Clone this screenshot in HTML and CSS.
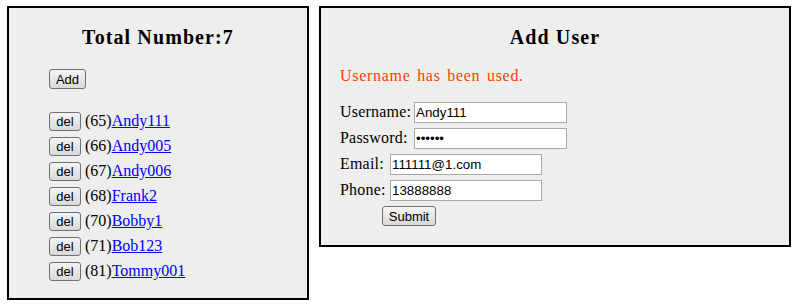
FILE: index.html
```html
<!DOCTYPE html>
<html>
<head>
<meta charset="utf-8">
<link rel="stylesheet" href="styles.css">
</head>
<body>
<div class="page">
  <div class="box list-box">
    <div class="title">Total Number:7</div>
    <div class="add-row"><button class="btn btn-add">Add</button></div>
    <div class="rows">
      <div class="row"><button class="btn btn-del">del</button><span class="txt">(65)<a href="#">Andy111</a></span></div>
      <div class="row"><button class="btn btn-del">del</button><span class="txt">(66)<a href="#">Andy005</a></span></div>
      <div class="row"><button class="btn btn-del">del</button><span class="txt">(67)<a href="#">Andy006</a></span></div>
      <div class="row"><button class="btn btn-del">del</button><span class="txt">(68)<a href="#">Frank2</a></span></div>
      <div class="row"><button class="btn btn-del">del</button><span class="txt">(70)<a href="#">Bobby1</a></span></div>
      <div class="row"><button class="btn btn-del">del</button><span class="txt">(71)<a href="#">Bob123</a></span></div>
      <div class="row"><button class="btn btn-del">del</button><span class="txt">(81)<a href="#">Tommy001</a></span></div>
    </div>
  </div>
  <div class="box form-box">
    <div class="title">Add User</div>
    <div class="error">Username has been used.</div>
    <div class="form">
      <div class="frow"><span class="lbl lbl-long">Username:</span><input class="inp inp-long" type="text" value="Andy111"></div>
      <div class="frow"><span class="lbl lbl-long">Password:</span><input class="inp inp-long" type="password" value="123456"></div>
      <div class="frow"><span class="lbl lbl-short">Email:</span><input class="inp inp-short" type="text" value="111111@1.com"></div>
      <div class="frow"><span class="lbl lbl-short">Phone:</span><input class="inp inp-short" type="text" value="13888888"></div>
      <div class="frow submit-row"><button class="btn btn-submit">Submit</button></div>
    </div>
  </div>
</div>
</body>
</html>
```
FILE: styles.css
```css
html, body {
  margin: 0;
  padding: 0;
  background: #ffffff;
}
body {
  font-family: "Liberation Serif", serif;
  font-size: 16px;
  letter-spacing: 0;
  color: #000;
}
.page {
  display: flex;
  align-items: flex-start;
  gap: 10px;
  padding: 6px 0 0 7px;
}
.box {
  box-sizing: border-box;
  border: 2px solid #000;
  background: #eeeeee;
}
.list-box {
  width: 302px;
  height: 294px;
  padding-left: 40px;
}
.form-box {
  width: 472px;
  height: 241px;
  padding-left: 19px;
}
.title {
  font-weight: bold;
  font-size: 20px;
  letter-spacing: 1.1px;
  line-height: 24px;
  margin-top: 17px;
  text-align: center;
}
.list-box .title {
  margin-left: -40px;
}
.form-box .title {
  margin-left: -19px;
}
.add-row {
  margin-top: 20px;
  height: 20px;
  display: flex;
}
.rows {
  margin-top: 23px;
  display: flex;
  flex-direction: column;
  gap: 6px;
}
.row {
  display: flex;
  align-items: center;
  height: 19px;
}
.txt {
  line-height: 19px;
  margin-left: 4px;
  white-space: nowrap;
  position: relative;
  top: -1px;
}
.txt a {
  color: #0000ff;
  text-decoration: underline;
}
.btn {
  font-family: "Liberation Sans", Arial, sans-serif;
  font-size: 13px;
  letter-spacing: 0;
  color: #000;
  box-sizing: border-box;
  height: 19px;
  padding: 0;
  border: 1px solid #707070;
  border-radius: 3px;
  background: linear-gradient(#f4f4f4, #e6e6e6 50%, #d9d9d9);
  line-height: 17px;
}
.btn-add { width: 37px; height: 20px; }
.btn-del { width: 32px; }
.btn-submit { width: 54px; height: 20px; }
.error {
  color: #ff4000;
  line-height: 18px;
  margin-top: 18px;
  letter-spacing: 0.7px;
  word-spacing: 2px;
}
.form {
  margin-top: 17px;
  display: flex;
  flex-direction: column;
  gap: 5px;
}
.frow {
  display: flex;
  align-items: center;
  height: 21px;
}
.lbl {
  line-height: 21px;
  white-space: nowrap;
  letter-spacing: 0.2px;
  position: relative;
  top: -1px;
}
.lbl-long { width: 72px; }
.lbl-short { width: 48px; }
.inp {
  box-sizing: border-box;
  height: 21px;
  margin: 0 0 0 2px;
  padding: 0 1px;
  border: 1px solid #a9a9a9;
  background: #fff;
  font-family: "Liberation Sans", Arial, sans-serif;
  font-size: 13.33px;
  letter-spacing: 0;
  color: #000;
  outline: none;
}
.inp-long { width: 153px; }
.inp-short { width: 152px; }
.submit-row {
  padding-left: 42px;
  height: 20px;
}
```
